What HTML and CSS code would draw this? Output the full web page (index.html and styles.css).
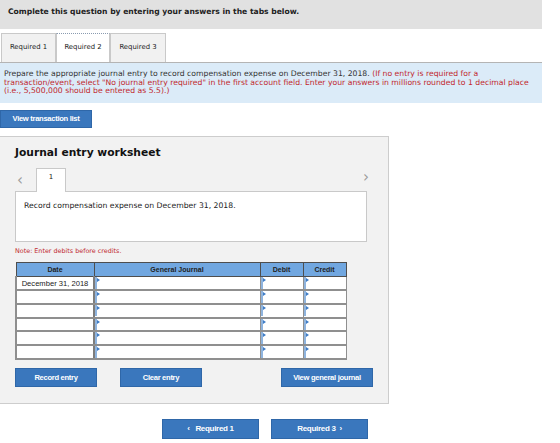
FILE: index.html
```html
<!DOCTYPE html>
<html lang="en">
<head>
    <meta charset="UTF-8">
    <title>Journal entry worksheet</title>
    <link rel="stylesheet" href="styles.css">
</head>
<body>
    <div class="page">
        <div class="top">Complete this question by entering your answers in the tabs below.</div>

        <div class="tabs">
            <div class="tab t1">Required 1</div>
            <div class="tab t2 active">Required 2</div>
            <div class="tab t3">Required 3</div>
        </div>

        <div class="info">
            Prepare the appropriate journal entry to record compensation expense on December 31, 2018. <span class="red">(If no entry is required for a transaction/event, select "No journal entry required" in the first account field. Enter your answers in millions rounded to 1 decimal place (i.e., 5,500,000 should be entered as 5.5).)</span>
        </div>

        <div class="btn btn-list">View transaction list</div>

        <div class="panel">
            <h2>Journal entry worksheet</h2>
            <div class="pager">
                <span class="arrow">&lsaquo;</span>
                <div class="num">1</div>
                <span class="arrow right">&rsaquo;</span>
            </div>
            <div class="desc">Record compensation expense on December 31, 2018.</div>
            <div class="note">Note: Enter debits before credits.</div>

            <table class="jt">
                <tr>
                    <th class="c-date">Date</th>
                    <th class="c-gj">General Journal</th>
                    <th class="c-num">Debit</th>
                    <th class="c-num">Credit</th>
                </tr>
                <tr>
                    <td class="date">December 31, 2018</td>
                    <td><div class="inp"></div></td>
                    <td><div class="inp"></div></td>
                    <td><div class="inp"></div></td>
                </tr>
                <tr>
                    <td class="date"></td>
                    <td><div class="inp"></div></td>
                    <td><div class="inp"></div></td>
                    <td><div class="inp"></div></td>
                </tr>
                <tr>
                    <td class="date"></td>
                    <td><div class="inp"></div></td>
                    <td><div class="inp"></div></td>
                    <td><div class="inp"></div></td>
                </tr>
                <tr>
                    <td class="date"></td>
                    <td><div class="inp"></div></td>
                    <td><div class="inp"></div></td>
                    <td><div class="inp"></div></td>
                </tr>
                <tr>
                    <td class="date"></td>
                    <td><div class="inp"></div></td>
                    <td><div class="inp"></div></td>
                    <td><div class="inp"></div></td>
                </tr>
                <tr>
                    <td class="date"></td>
                    <td><div class="inp"></div></td>
                    <td><div class="inp"></div></td>
                    <td><div class="inp"></div></td>
                </tr>
            </table>

            <div class="actions">
                <div class="btn btn-record">Record entry</div>
                <div class="btn btn-clear">Clear entry</div>
                <div class="btn btn-view">View general journal</div>
            </div>
        </div>

        <div class="nav">
            <div class="btn btn-nav">&lsaquo;&nbsp;&nbsp; Required 1</div>
            <div class="btn btn-nav">Required 3 &nbsp;&rsaquo;</div>
        </div>
    </div>
</body>
</html>
```

FILE: styles.css
```css
*{
    margin: 0;
    padding: 0;
    box-sizing: border-box;
}
body{
    background: #fff;
    font-family: "DejaVu Sans", Verdana, sans-serif;
    color: #222;
}
.page{
    width: 542px;
}
.top{
    height: 29px;
    background: #e1e1e1;
    padding: 7px 0 0 8px;
    font-size: 7.6px;
    font-weight: bold;
    color: #222;
}

/* tabs */
.tabs{
    display: flex;
    margin-top: 4px;
    height: 29px;
    padding-left: 1px;
}
.tab{
    height: 29px;
    border: 1px solid #c9c9c9;
    border-bottom: 0;
    background: #f1f1f1;
    font-size: 6.9px;
    line-height: 27px;
    text-align: center;
    color: #222;
}
.t1{ width: 55px; }
.t2{ width: 54px; }
.t3{ width: 56px; }
.tab.active{
    background: #fff;
    border-top: 1px dotted #8a9bb0;
}

/* instructions */
.info{
    background: #dbebf8;
    border-top: 1px solid #b4b4b4;
    padding: 7px 4px 0 4px;
    font-size: 7.7px;
    line-height: 8.7px;
    color: #333;
    height: 41px;
}
.red{
    color: #c1272d;
}

/* buttons */
.btn{
    background: #3a77bd;
    color: #fff;
    font-family: "Liberation Sans", Arial, sans-serif;
    font-weight: bold;
    font-size: 7.6px;
    letter-spacing: -0.3px;
    text-align: center;
    border: 1px solid #2f67a8;
}
.btn-list{
    width: 92px;
    height: 18px;
    line-height: 16px;
    margin-top: 7px;
}

/* worksheet panel */
.panel{
    width: 389px;
    height: 268px;
    margin-top: 8px;
    background: #f2f2f2;
    border: 1px solid #cdcdcd;
    border-left: 0;
    padding: 0 0 0 15px;
}
.panel h2{
    font-size: 10.7px;
    font-weight: bold;
    color: #111;
    margin-top: 9px;
    height: 22px;
}
.pager{
    display: flex;
    align-items: flex-end;
    height: 23px;
    position: relative;
}
.arrow{
    font-size: 15px;
    line-height: 18px;
    color: #9a9a9a;
    width: 21px;
    padding-left: 2px;
    align-self: center;
}
.arrow.right{
    position: absolute;
    left: 346px;
    top: 0;
}
.num{
    width: 30px;
    height: 24px;
    background: #fff;
    border: 1px solid #c9c9c9;
    border-bottom: 0;
    font-size: 7px;
    text-align: center;
    padding-top: 4px;
    margin-bottom: -1px;
    position: relative;
    z-index: 1;
}
.desc{
    width: 352px;
    height: 51px;
    background: #fff;
    border: 1px solid #c9c9c9;
    font-size: 7.7px;
    padding: 9px 0 0 8px;
    color: #222;
}
.note{
    font-size: 6.4px;
    color: #c1272d;
    margin-top: 5px;
    height: 15px;
}

/* journal table */
.jt{
    border-collapse: collapse;
    width: 331px;
    table-layout: fixed;
}
.jt th{
    background: #71a7e0;
    border: 1px solid #4e4e4e;
    height: 14px;
    font-family: "Liberation Sans", Arial, sans-serif;
    font-weight: bold;
    font-size: 7px;
    color: #222;
    text-align: center;
}
.c-date{ width: 78px; }
.c-gj{ width: 166px; }
.c-num{ width: 43px; }
.jt td{
    border: 1px solid #8f8f8f;
    border-bottom-width: 2px;
    height: 13.7px;
    background: #fff;
    padding: 0;
}
.jt td.date{
    font-family: "Liberation Sans", Arial, sans-serif;
    font-size: 7.6px;
    color: #222;
    text-align: center;
    border-left-width: 2px;
    border-right: 2px solid #7d7d7d;
}
.inp{
    height: 11.5px;
    border-left: 2px solid #8fb4de;
    position: relative;
}
.inp::before{
    content: "";
    position: absolute;
    left: 0;
    top: 1px;
    border-top: 2px solid transparent;
    border-bottom: 2px solid transparent;
    border-left: 3px solid #3e7cc6;
}

/* panel buttons */
.actions{
    display: flex;
    margin-top: 8px;
}
.actions .btn{
    height: 19px;
    line-height: 17px;
}
.btn-record{ width: 82px; }
.btn-clear{ width: 82px; margin-left: 23px; }
.btn-view{ width: 92px; margin-left: 79px; }

/* bottom navigation */
.nav{
    display: flex;
    gap: 12px;
    margin: 15px 0 0 162px;
}
.btn-nav{
    width: 97px;
    height: 20px;
    line-height: 18px;
    font-size: 8px;
}
```
